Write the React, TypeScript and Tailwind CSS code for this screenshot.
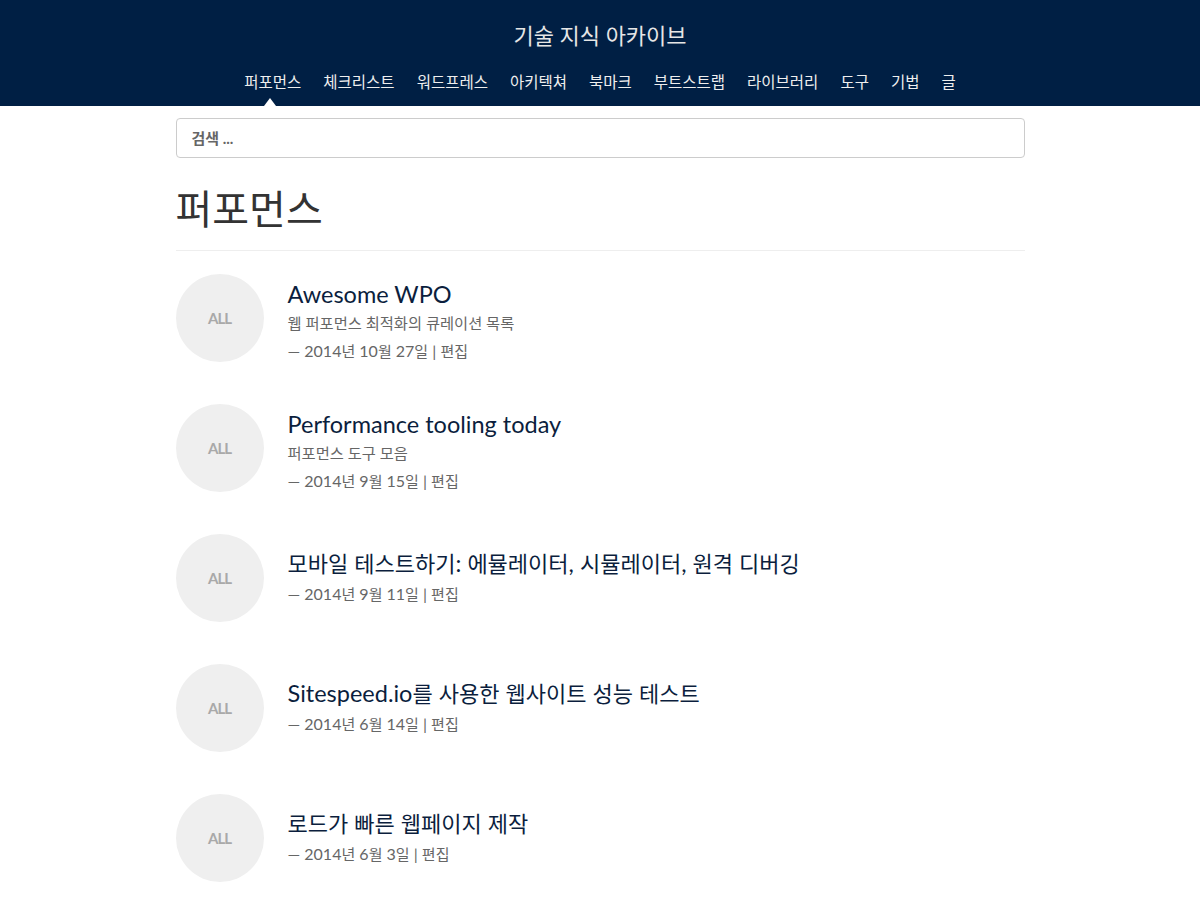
import React from "react";

const nav = ["퍼포먼스", "체크리스트", "워드프레스", "아키텍쳐", "북마크", "부트스트랩", "라이브러리", "도구", "기법", "글"];

const posts = [
    { title: "Awesome WPO", desc: "웹 퍼포먼스 최적화의 큐레이션 목록", date: "2014년 10월 27일" },
    { title: "Performance tooling today", desc: "퍼포먼스 도구 모음", date: "2014년 9월 15일" },
    { title: "모바일 테스트하기: 에뮬레이터, 시뮬레이터, 원격 디버깅", date: "2014년 9월 11일" },
    { title: "Sitespeed.io를 사용한 웹사이트 성능 테스트", date: "2014년 6월 14일" },
    { title: "로드가 빠른 웹페이지 제작", date: "2014년 6월 3일" },
];

function Mixed({ text, latin }: { text: string; latin: string }) {
    const parts = text.split(/([\uAC00-\uD7A3]+)/).filter(Boolean);
    return (
        <>
            {parts.map((s, i) =>
                /[\uAC00-\uD7A3]/.test(s) ? <span key={i}>{s}</span> : <span key={i} className={latin}>{s}</span>
            )}
        </>
    );
}

export default function App() {
    return (
        <div className="min-h-[900px] bg-white font-['Lato','Noto_Sans_CJK_KR',sans-serif]">
            <header className="bg-[#001f44] h-[106px] flex flex-col items-center">
                <h1 className="pt-[21px] text-[22px] leading-[30px] text-[#e6e6e6]">기술 지식 아카이브</h1>
                <nav className="mt-[20px] flex gap-[22px] text-[15.5px] leading-[22px] text-[#eeeeee]">
                    {nav.map((n, i) => (
                        <a key={n} className="relative">
                            {n}
                            {i === 0 && (
                                <span className="absolute left-[calc(50%-3px)] -translate-x-1/2 top-[27px] w-0 h-0 border-l-[6px] border-r-[6px] border-b-[8px] border-l-transparent border-r-transparent border-b-white" />
                            )}
                        </a>
                    ))}
                </nav>
            </header>

            <main className="w-[849px] mx-auto pt-[12px]">
                <div className="h-[40px] rounded-[4px] border border-[#cccccc] flex items-center px-[15px] text-[15px] font-bold text-[#666666]">
                    검색 ...
                </div>
                <h2 className="mt-[27px] text-[40px] leading-[48px] text-[#333333]">퍼포먼스</h2>
                <div className="mt-[17px] border-t border-[#eeeeee]" />

                <ul className="mt-[23px] flex flex-col gap-[42px]">
                    {posts.map((p) => (
                        <li key={p.title} className="flex gap-[24px] h-[88px]">
                            <div className="w-[88px] h-[88px] shrink-0 rounded-full bg-[#efefef] flex items-center justify-center text-[15px] font-bold text-[#a9a9a9] tracking-[-1px]">
                                ALL
                            </div>
                            <div className={p.desc ? "pt-[6px]" : "pt-[15px]"}>
                                <h3 className="text-[22px] leading-[28px] text-[#0b1e3d]">
                                    <Mixed text={p.title} latin="text-[23.5px]" />
                                </h3>
                                {p.desc && <p className="mt-[1px] text-[15.3px] leading-[27px] text-[#666666]">{p.desc}</p>}
                                <p className={p.desc ? "text-[15px] leading-[27px] text-[#666666]" : "mt-[2px] text-[15px] leading-[27px] text-[#666666]"}>
                                    <Mixed text={`— ${p.date} | 편집`} latin="text-[16px]" />
                                </p>
                            </div>
                        </li>
                    ))}
                </ul>
            </main>
        </div>
    );
}
